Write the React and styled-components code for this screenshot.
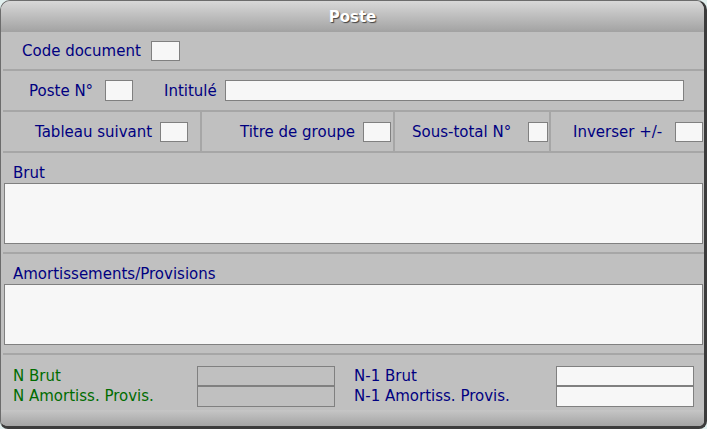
import React from 'react';
import styled, { createGlobalStyle } from 'styled-components';

const GlobalStyle = createGlobalStyle`
  html, body {
    margin: 0;
    padding: 0;
    background: #e2f0ef;
  }
  body {
    font-family: "DejaVu Sans", Verdana, sans-serif;
    font-size: 15px;
  }
`;

const Window = styled.div`
  width: 707px;
  height: 429px;
  box-sizing: border-box;
  display: flex;
  flex-direction: column;
  background: #c0c0c0;
  border: 1px solid #6c6c6c;
  border-right: 3px solid #3c3c3c;
  border-bottom: 3px solid #3c3c3c;
  border-radius: 10px 10px 8px 8px;
  overflow: hidden;
`;

const TitleBar = styled.div`
  height: 31px;
  flex: none;
  display: flex;
  align-items: center;
  justify-content: center;
  background: linear-gradient(#d8d8d8, #a2a2a2);
  color: #fff;
  font-weight: bold;
  text-shadow: 1px 1px 1px #404040;
`;

const Body = styled.div`
  flex: 1;
  display: flex;
  flex-direction: column;
  padding-left: 2px;
`;

const Row = styled.div`
  height: ${(p) => p.$h}px;
  flex: none;
  display: flex;
  align-items: center;
  padding-left: ${(p) => p.$pl || 0}px;
  border-bottom: 2px solid #a6a6a6;
`;

const Cell = styled.div`
  width: ${(p) => p.$w}px;
  height: 100%;
  flex: none;
  display: flex;
  align-items: center;
  padding-left: ${(p) => p.$pl}px;
  box-sizing: border-box;
  border-left: ${(p) => (p.$first ? 'none' : '2px solid #a6a6a6')};
  overflow: hidden;
`;

const Label = styled.span`
  width: ${(p) => (p.$w ? `${p.$w}px` : 'auto')};
  flex: none;
  color: ${(p) => (p.$green ? '#006c00' : '#000080')};
  white-space: nowrap;
  line-height: 20px;
`;

const Input = styled.div`
  width: ${(p) => p.$w}px;
  height: ${(p) => p.$h || 21}px;
  flex: none;
  box-sizing: border-box;
  background: ${(p) => (p.$off ? '#c0c0c0' : '#f7f7f7')};
  border: 1px solid #808080;
`;

const Section = styled.div`
  height: 101px;
  flex: none;
  display: flex;
  flex-direction: column;
  padding: 10px 1px 0;
  box-sizing: border-box;
  border-bottom: 2px solid #a6a6a6;
  ${Label} {
    margin-left: 9px;
  }
`;

const TextArea = styled.div`
  height: 61px;
  box-sizing: border-box;
  background: #f7f7f7;
  border: 1px solid #808080;
`;

const Totals = styled.div`
  flex: 1;
  display: grid;
  grid-template-columns: 184px 138px 221px 138px;
  grid-template-rows: 20px 20px;
  align-items: center;
  padding: 11px 0 0 10px;
  box-sizing: border-box;
  & > :nth-child(4n + 3) {
    margin-left: 19px;
  }
`;

const BottomBar = styled.div`
  height: 16px;
  flex: none;
  background: linear-gradient(#c6c6c6, #a4a4a4);
`;

export default function App() {
  return (
    <>
      <GlobalStyle />
      <Window>
        <TitleBar>Poste</TitleBar>
        <Body>
          <Row $h={37} $pl={19}>
            <Label $w={129}>Code document</Label>
            <Input $w={29} $h={20} />
          </Row>
          <Row $h={39} $pl={26}>
            <Label $w={76}>Poste N°</Label>
            <Input $w={28} />
            <Label $w={61} style={{ marginLeft: 31 }}>Intitulé</Label>
            <Input $w={459} />
          </Row>
          <Row $h={39}>
            <Cell $w={197} $pl={32} $first>
              <Label $w={125}>Tableau suivant</Label>
              <Input $w={28} $h={20} />
            </Cell>
            <Cell $w={193} $pl={38}>
              <Label $w={123}>Titre de groupe</Label>
              <Input $w={28} $h={20} />
            </Cell>
            <Cell $w={156} $pl={17}>
              <Label $w={116}>Sous-total N°</Label>
              <Input $w={20} $h={20} />
            </Cell>
            <Cell $w={154} $pl={22}>
              <Label $w={102}>Inverser +/-</Label>
              <Input $w={28} $h={20} />
            </Cell>
          </Row>
          <Section>
            <Label>Brut</Label>
            <TextArea />
          </Section>
          <Section>
            <Label>Amortissements/Provisions</Label>
            <TextArea />
          </Section>
          <Totals>
            <Label $green>N Brut</Label>
            <Input $w={138} $h={20} $off />
            <Label>N-1 Brut</Label>
            <Input $w={138} $h={20} />
            <Label $green>N Amortiss. Provis.</Label>
            <Input $w={138} $h={21} $off />
            <Label>N-1 Amortiss. Provis.</Label>
            <Input $w={138} $h={21} />
          </Totals>
        </Body>
        <BottomBar />
      </Window>
    </>
  );
}
